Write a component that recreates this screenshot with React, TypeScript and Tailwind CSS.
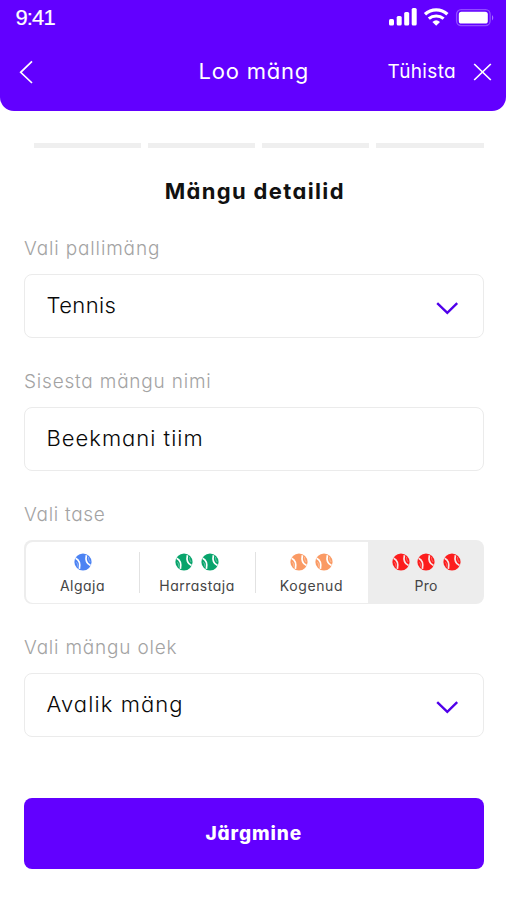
import type { ReactNode } from "react";

function Chevron() {
  return (
    <svg width="24" height="14" viewBox="0 0 24 14" fill="none" className="mr-[24px] mt-[3px] shrink-0">
      <path d="M2.2 2.2 12.3 11.8 22.2 2.2" stroke="#5000ea" strokeWidth="2.4" />
    </svg>
  );
}

function Ball({ color, line = "#fff" }: { color: string; line?: string }) {
  return (
    <svg width="18" height="18" viewBox="0 0 18 18" fill="none">
      <circle cx="9" cy="9" r="8.6" fill={color} />
      <path d="M1.6 5.2C5 6.8 6.4 10.8 5.4 15.8M12.4 2.2C11.4 6.6 12.8 10.8 16.6 12.6" stroke={line} strokeWidth="1.7" />
      <path d="M2.4 9.2C3.4 10.4 3.8 12 3.6 13.6M14.6 4C14.4 6 15 7.8 16.2 9" stroke={line} strokeWidth=".8" strokeOpacity=".45" />
    </svg>
  );
}

function Field({ label, tracking, children }: { label: string; tracking: string; children: ReactNode }) {
  return (
    <section className="h-[133px]">
      <div className={`flex h-[24px] items-center whitespace-nowrap text-[19px] font-light text-[#a3a3a3] ${tracking}`}>{label}</div>
      <div className="mt-[13px]">{children}</div>
    </section>
  );
}

function Box({ text, tracking, arrow }: { text: string; tracking: string; arrow?: boolean }) {
  return (
    <div className="flex h-[64px] items-center justify-between rounded-[8px] border-[1.5px] border-[#ebebeb] pl-[21.5px]">
      <span className={`-mt-[1px] whitespace-nowrap text-[22px] font-light text-[#080808] ${tracking}`}>{text}</span>
      {arrow && <Chevron />}
    </div>
  );
}

function Level({ name, color, count, className, tracking, line }: { name: string; color: string; count: number; className: string; tracking: string; line?: string }) {
  return (
    <div className={`flex flex-col items-center pt-[11.5px] ${className}`}>
      <div className="flex h-[18px] gap-[7.5px]">
        {Array.from({ length: count }, (_, i) => <Ball key={i} color={color} line={line} />)}
      </div>
      <span className={`mt-[6px] whitespace-nowrap text-[14px] leading-[18px] text-[#454545] ${tracking}`}>{name}</span>
    </div>
  );
}

export default function App() {
  return (
    <div className="h-[900px] w-[506px] overflow-hidden bg-white font-[Inter,sans-serif] [font-feature-settings:'cv11','ss03']">
      <header className="h-[111px] rounded-b-[14px] bg-[#6200ff] text-white">
        <div className="flex h-[36px] items-center justify-between pl-[15.5px] pr-[11px]">
          <span className="font-['Liberation_Sans',sans-serif] text-[22px] leading-[24px] tracking-[-0.9px] [-webkit-text-stroke:0.2px_white]">9:41</span>
          <svg width="106" height="20" viewBox="0 0 106 20" fill="none">
            <rect x="0" y="11" width="5" height="6.5" rx="1.5" fill="#fff" />
            <rect x="7.7" y="8" width="5" height="9.5" rx="1.5" fill="#fff" />
            <rect x="15.2" y="4" width="5" height="13.5" rx="1.5" fill="#fff" />
            <rect x="22.7" y="0" width="5" height="17.5" rx="1.5" fill="#fff" />
            <path d="M36 6.2A16.5 16.5 0 0 1 58.4 6.2" stroke="#fff" strokeWidth="3.3" />
            <path d="M39.8 10.7A11.3 11.3 0 0 1 54.6 10.7" stroke="#fff" strokeWidth="3.1" />
            <path d="M43.4 13.9A6 6 0 0 1 51 13.9L47.2 17.8Z" fill="#fff" />
            <rect x="67.6" y="1.6" width="33.5" height="16" rx="4.5" stroke="#fff" strokeOpacity=".3" strokeWidth="1.3" />
            <rect x="69.8" y="3.8" width="29" height="11.7" rx="2.6" fill="#fff" />
            <path d="M103 7v5.4c1.7-1.3 1.7-4.1 0-5.4Z" fill="#fff" fillOpacity=".45" />
          </svg>
        </div>
        <div className="grid h-[71px] grid-cols-[1fr_auto_1fr] items-center pl-[18.5px] pr-[14px]">
          <svg width="14" height="24" viewBox="0 0 14 24" fill="none">
            <path d="M13 1.3 1.7 12.3 13 23" stroke="#fff" strokeWidth="1.7" />
          </svg>
          <h1 className="mr-[3px] whitespace-nowrap text-[22px] tracking-[0.8px]">Loo mäng</h1>
          <div className="flex items-center justify-end gap-[17px]">
            <span className="mt-[2px] text-[19px] tracking-[0.35px]">Tühista</span>
            <svg width="19" height="18" viewBox="0 0 19 18" fill="none">
              <path d="M1.2 1 17.8 17M17.8 1 1.2 17" stroke="#fff" strokeWidth="1.7" />
            </svg>
          </div>
        </div>
      </header>

      <main className="pl-[24px] pr-[22.5px]">
        <div className="ml-[10px] mt-[32px] flex h-[5px] gap-[7px]">
          {[1, 2, 3, 4].map((step) => <div key={step} className="flex-1 bg-[#efefef]" />)}
        </div>
        <h2 className="mt-[31px] flex h-[24px] items-center justify-center whitespace-nowrap pl-[2px] text-[22px] font-bold tracking-[1.35px] text-[#111]">Mängu detailid</h2>

        <div className="mt-[34px]">
          <Field label="Vali pallimäng" tracking="tracking-[0.85px]">
            <Box text="Tennis" tracking="tracking-[0.4px]" arrow />
          </Field>
          <Field label="Sisesta mängu nimi" tracking="tracking-[0.8px]">
            <Box text="Beekmani tiim" tracking="tracking-[1px]" />
          </Field>
          <Field label="Vali tase" tracking="tracking-[0.7px]">
            <div className="flex h-[64px] overflow-hidden rounded-[8px] bg-[#ededed] p-[1.5px]">
              <div className="flex w-[342.5px] shrink-0 rounded-l-[7px] bg-white">
                <Level name="Algaja" color="#4c83f3" count={1} className="w-[113px] pl-[1px]" tracking="tracking-[0.5px]" />
                <div className="mt-[10px] h-[41px] w-[1px] bg-[#e2e2e2]" />
                <Level name="Harrastaja" color="#08a46c" count={2} className="w-[115px]" tracking="tracking-[0.5px]" />
                <div className="mt-[10px] h-[41px] w-[1px] bg-[#e2e2e2]" />
                <Level name="Kogenud" color="#fa9a64" count={2} className="w-[112px]" tracking="tracking-[0.6px]" />
              </div>
              <Level name="Pro" color="#fc1d1d" count={3} className="flex-1 pl-[2px]" tracking="tracking-[0.2px]" line="#f6e8e8" />
            </div>
          </Field>
          <Field label="Vali mängu olek" tracking="tracking-[0.8px]">
            <Box text="Avalik mäng" tracking="tracking-[1.1px]" arrow />
          </Field>
        </div>
        <button className="mt-[28.5px] flex h-[71px] w-full items-center justify-center rounded-[8px] bg-[#6200ff] pt-[2px] text-[19px] font-extrabold tracking-[0.9px] text-white">Järgmine</button>
      </main>
    </div>
  );
}
